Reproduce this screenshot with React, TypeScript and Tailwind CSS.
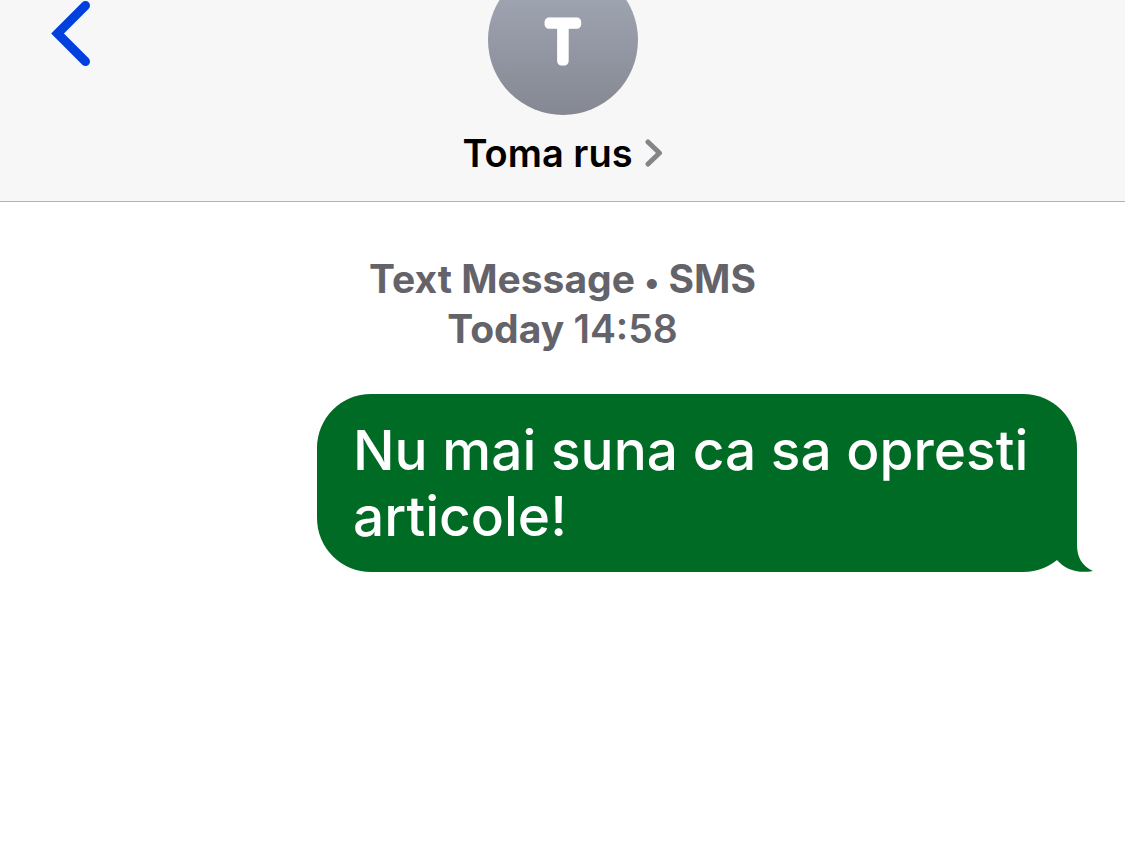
interface IContact {
  name: string
  initial: string
}

interface IMessage {
  id: number
  text: string
}

const contact: IContact = { name: "Toma rus", initial: "T" }

const messages: IMessage[] = [
  { id: 1, text: "Nu mai suna ca sa opresti articole!" },
]

function Avatar({ initial }: { initial: string }) {
  return (
    <div className="-mt-[35px] size-[150px] rounded-full bg-linear-to-b from-[#a5abb9] to-[#858892]">
      <svg viewBox="0 0 150 150" className="size-full">
        <text
          x="75"
          y="96"
          textAnchor="middle"
          className="fill-white stroke-white font-['Inter',sans-serif] text-[54px] font-extralight"
          strokeWidth="9"
          strokeLinejoin="round"
        >
          {initial}
        </text>
      </svg>
    </div>
  )
}

function ChatHeader({ name, initial }: IContact) {
  return (
    <header className="grid grid-cols-[1fr_auto_1fr] items-start overflow-hidden border-b border-[#b2b2b4] bg-[#f7f7f7]">
      <button type="button" aria-label="Back" className="ml-12 w-fit">
        <svg
          viewBox="0 0 46 70"
          className="h-[70px] w-[46px] fill-none stroke-[#0040dd]"
          strokeWidth="9"
          strokeLinecap="round"
        >
          <path d="M37.5 5.5 9.5 33.5l28 28" strokeLinejoin="miter" />
        </svg>
      </button>

      <div className="flex flex-col items-center">
        <Avatar initial={initial} />
        <button
          type="button"
          className="mt-[14px] mb-6 flex items-center gap-3 text-[38px] leading-[48px] font-semibold text-black"
        >
          {name}
          <svg
            viewBox="0 0 18 28"
            className="h-7 w-[18px] fill-none stroke-[#858589]"
            strokeWidth="5"
            strokeLinecap="round"
            strokeLinejoin="round"
          >
            <path d="m3 3 11.5 11L3 25" />
          </svg>
        </button>
      </div>
    </header>
  )
}

function MessageBubble({ text }: { text: string }) {
  return (
    <div className="relative ml-auto max-w-[760px] rounded-[54px] bg-[#006b24] px-9 pt-[23px] pb-[23px] text-[55px] leading-[66px] font-medium text-white">
      {text}
      <svg
        viewBox="0 0 38 54"
        className="absolute -right-4 bottom-0 h-[54px] w-[38px] fill-[#006b24]"
      >
        <path d="M2 0h20v27c0 12 5 21 16 26-16 3-28-2-36-11z" />
      </svg>
    </div>
  )
}

export default function App() {
  return (
    <div className="min-h-screen bg-white font-['Inter',sans-serif]">
      <ChatHeader {...contact} />

      <main className="flex flex-col px-12">
        <div className="mt-[52px] text-center text-[39px] leading-[50px] font-bold text-[#646369]">
          <p>
            Text Message <span className="text-[32px] leading-none">•</span> SMS
          </p>
          <p>
            Today <time className="font-semibold">14:58</time>
          </p>
        </div>

        <div className="mt-10 flex flex-col gap-2">
          {messages.map((message) => (
            <MessageBubble key={message.id} text={message.text} />
          ))}
        </div>
      </main>
    </div>
  )
}
